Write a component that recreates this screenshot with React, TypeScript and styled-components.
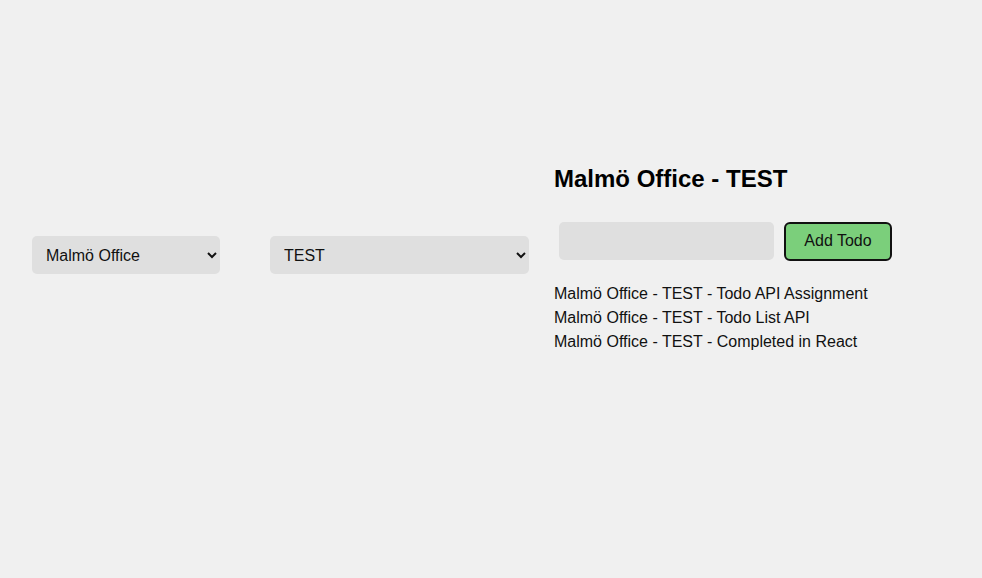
import React from "react";
import styled, { createGlobalStyle } from "styled-components";

const Global = createGlobalStyle`
  html, body { margin: 0; padding: 0; background: #f0f0f0; }
  body { font-family: Arial, "Liberation Sans", sans-serif; color: #111; }
`;

const Page = styled.div`
  height: 510px;
  display: flex;
  align-items: flex-start;
  padding-left: 32px;
  padding-top: 166px;
  box-sizing: border-box;
`;

const Select = styled.select<{ $w: number }>`
  width: ${(p) => p.$w}px;
  height: 38px;
  border: none;
  border-radius: 5px;
  background: #dfdfdf;
  font-family: Arial, "Liberation Sans", sans-serif;
  font-size: 16px;
  color: #111;
  padding: 0 8px 0 10px;
  outline: none;
`;

const SelectSlot = styled.div<{ $mr: number }>`
  margin-right: ${(p) => p.$mr}px;
  margin-top: 70px;
  display: flex;
`;

const Column = styled.div`
  display: flex;
  flex-direction: column;
`;

const Title = styled.h2`
  margin: 0;
  font-size: 24px;
  font-weight: bold;
  line-height: 26px;
  color: #000;
`;

const Form = styled.form`
  display: flex;
  align-items: flex-start;
  margin-top: 30px;
  padding-left: 5px;
  gap: 10px;
`;

const Input = styled.input`
  width: 215px;
  height: 38px;
  box-sizing: border-box;
  border: none;
  border-radius: 5px;
  background: #dfdfdf;
  font-size: 16px;
  outline: none;
`;

const Button = styled.button`
  width: 108px;
  height: 39px;
  box-sizing: border-box;
  border: 2px solid #111;
  border-radius: 6px;
  background: #7bcf7b;
  color: #111;
  font-family: Arial, "Liberation Sans", sans-serif;
  font-size: 16px;
  padding: 0 0 2px;
  cursor: pointer;
`;

const List = styled.ul`
  list-style: none;
  margin: 21px 0 0;
  padding: 0;
`;

const Item = styled.li`
  font-size: 16px;
  line-height: 24px;
  color: #111;
`;

export default function App() {
  const todos = ["Todo API Assignment", "Todo List API", "Completed in React"];
  return (
    <>
      <Global />
      <Page>
        <SelectSlot $mr={50}>
          <Select $w={188} defaultValue="malmo">
            <option value="malmo">Malmö Office</option>
          </Select>
        </SelectSlot>
        <SelectSlot $mr={25}>
          <Select $w={259} defaultValue="test">
            <option value="test">TEST</option>
          </Select>
        </SelectSlot>
        <Column>
          <Title>Malmö Office - TEST</Title>
          <Form onSubmit={(e) => e.preventDefault()}>
            <Input />
            <Button type="submit">Add Todo</Button>
          </Form>
          <List>
            {todos.map((t) => (
              <Item key={t}>Malmö Office - TEST - {t}</Item>
            ))}
          </List>
        </Column>
      </Page>
    </>
  );
}
